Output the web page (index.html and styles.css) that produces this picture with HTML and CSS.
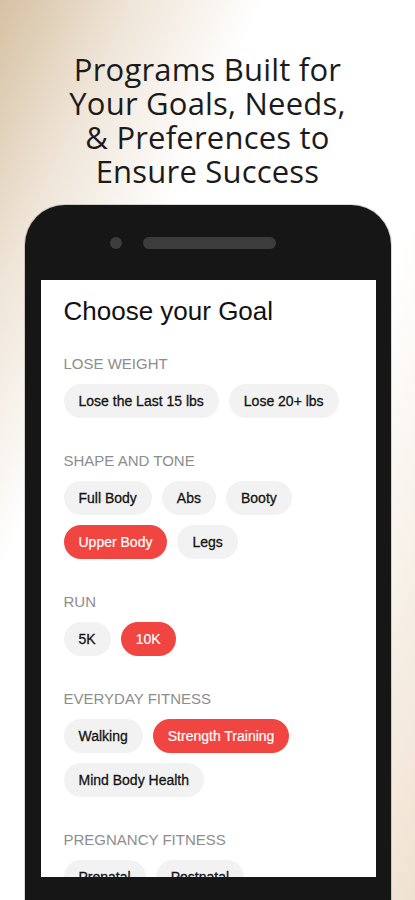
FILE: index.html
```html
<!DOCTYPE html>
<html lang="en">
<head>
    <meta charset="UTF-8">
    <meta name="viewport" content="width=device-width, initial-scale=1.0">
    <title>Choose your Goal</title>
    <link rel="stylesheet" href="styles.css">
</head>
<body>
    <h1 class="headline">
        <span>Programs Built for</span>
        <span>Your Goals, Needs,</span>
        <span>&amp; Preferences to</span>
        <span>Ensure Success</span>
    </h1>

    <div class="phone">
        <!-- Top bezel: camera + speaker -->
        <div class="phone-top">
            <span class="camera"></span>
            <span class="speaker"></span>
        </div>

        <div class="screen">
            <h2 class="title">Choose your Goal</h2>

            <div class="section first">
                <div class="label">Lose Weight</div>
                <div class="chips">
                    <span class="chip">Lose the Last 15 lbs</span>
                    <span class="chip">Lose 20+ lbs</span>
                </div>
            </div>

            <div class="section">
                <div class="label">Shape and Tone</div>
                <div class="chips">
                    <span class="chip">Full Body</span>
                    <span class="chip">Abs</span>
                    <span class="chip">Booty</span>
                    <span class="chip active">Upper Body</span>
                    <span class="chip">Legs</span>
                </div>
            </div>

            <div class="section">
                <div class="label">Run</div>
                <div class="chips">
                    <span class="chip">5K</span>
                    <span class="chip active">10K</span>
                </div>
            </div>

            <div class="section">
                <div class="label">Everyday Fitness</div>
                <div class="chips">
                    <span class="chip">Walking</span>
                    <span class="chip active">Strength Training</span>
                    <span class="chip">Mind Body Health</span>
                </div>
            </div>

            <div class="section">
                <div class="label">Pregnancy Fitness</div>
                <div class="chips">
                    <span class="chip">Prenatal</span>
                    <span class="chip">Postnatal</span>
                </div>
            </div>
        </div>
    </div>
</body>
</html>
```

FILE: styles.css
```css
/* Resetting some defaults */
* {
    margin: 0;
    padding: 0;
    box-sizing: border-box;
}

body {
    font-family: 'Liberation Sans', Arial, sans-serif;
    background: linear-gradient(to bottom right, #d6c1a3 0%, #efe5d8 16%, #ffffff 32%, #ffffff 62%, #f0e2d1 100%);
    width: 415px;
    height: 900px;
    overflow: hidden;
}

/* Headline */
.headline {
    font-family: 'Open Sans', sans-serif;
    font-weight: 400;
    font-size: 31px;
    color: #1b1b1b;
    text-align: center;
    padding-top: 52px;
    display: flex;
    flex-direction: column;
    align-items: center;
}

.headline span {
    display: block;
    height: 34px;
    line-height: 34px;
    letter-spacing: 0.2px;
}

/* Phone frame */
.phone {
    width: 366px;
    height: 720px;
    margin: 17px auto 0;
    background: #161616;
    border-radius: 40px 40px 0 0;
    padding: 0 15px 0 16px;
    box-shadow: 0 0 0 1px rgba(0, 0, 0, 0.15);
    overflow: hidden;
}

.phone-top {
    height: 75px;
    display: flex;
    align-items: center;
    gap: 21px;
    padding-left: 69px;
}

.camera {
    width: 12px;
    height: 12px;
    border-radius: 50%;
    background: #3c3c3c;
}

.speaker {
    width: 133px;
    height: 12px;
    border-radius: 6px;
    background: #3c3c3c;
}

/* Screen */
.screen {
    background: #fff;
    height: 597px;
    padding: 15px 20px 0 23px;
    overflow: hidden;
}

.title {
    font-size: 26px;
    line-height: 32px;
    font-weight: 400;
    color: #111;
}

.section {
    margin-top: 33px;
}

.section.first {
    margin-top: 27px;
}

.label {
    font-size: 15px;
    line-height: 20px;
    color: #8d8d8d;
    text-transform: uppercase;
    margin-bottom: 10px;
}

.chips {
    display: flex;
    flex-wrap: wrap;
    gap: 10px;
}

.chip {
    display: flex;
    align-items: center;
    height: 34px;
    padding: 0 15px;
    border-radius: 17px;
    background: #f2f2f2;
    color: #141414;
    font-size: 14px;
    -webkit-text-stroke: 0.3px currentColor;
}

.chip.active {
    background: #f04541;
    color: #fff;
    -webkit-text-stroke: 0.2px currentColor;
}
```
